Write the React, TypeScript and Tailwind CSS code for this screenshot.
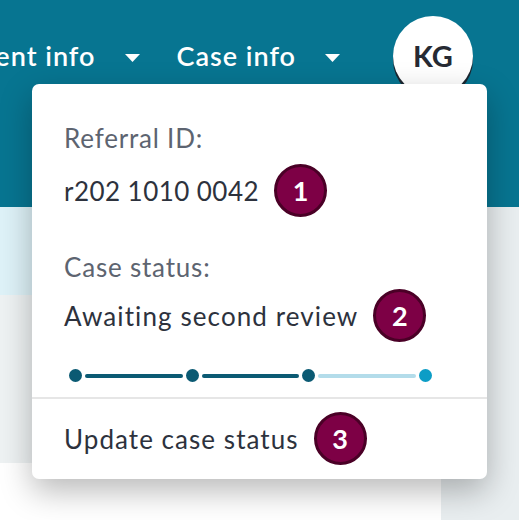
import React from "react";

function Caret() {
  return (
    <svg width="15" height="8" viewBox="0 0 15 8" className="shrink-0">
      <polygon points="0,0 15,0 7.5,8" fill="#ffffff" />
    </svg>
  );
}

function Badge({ n }: { n: string }) {
  return (
    <div className="flex h-[53px] w-[53px] shrink-0 items-center justify-center rounded-full border-[3px] border-[#4a0026] bg-[#7d0045] text-[27px] font-bold leading-none text-white">
      {n}
    </div>
  );
}

export default function App() {
  return (
    <div
      className="relative h-[520px] w-[519px] overflow-hidden bg-white"
      style={{ fontFamily: "Lato, 'Noto Sans', sans-serif" }}
    >
      {/* header */}
      <div className="flex h-[207px] items-start justify-end overflow-hidden bg-[#077591] pr-[46px] pt-[16px]">
        <div className="flex h-[80px] shrink-0 items-center whitespace-nowrap text-[27px] font-semibold tracking-[1px] text-white">
          <span>Patient info</span>
          <span className="ml-[30px] mt-[4px]">
            <Caret />
          </span>
          <span className="ml-[36px]">Case info</span>
          <span className="ml-[29px] mt-[4px]">
            <Caret />
          </span>
          <div className="ml-[53px] flex h-[80px] w-[80px] items-center justify-center rounded-full bg-white text-[29px] font-bold tracking-normal text-[#262a33] shadow-[0_4px_0_#1b2630]">
            KG
          </div>
        </div>
      </div>

      {/* body */}
      <div className="flex h-[313px]">
        <div className="flex flex-1 flex-col">
          <div className="h-[88px] bg-[#def2f8]" />
          <div className="h-[168px] bg-[#eef2f3]" />
          <div className="flex-1 bg-white" />
        </div>
        <div className="w-[78px] bg-[#e9eef0]" />
      </div>

      {/* dropdown */}
      <div className="absolute left-[32px] top-[84px] w-[455px] rounded-[7px] bg-white shadow-[0_12px_32px_rgba(0,0,0,0.28)]">
        <div className="px-[32px] pt-[38px]">
          <div className="text-[26px] leading-[32px] tracking-[0.8px] text-[#5d6470]">Referral ID:</div>
          <div className="mt-[10px] flex items-center gap-[15px]">
            <span className="text-[26px] leading-[32px] tracking-[0.45px] text-[#2d323d]">r202 1010 0042</span>
            <Badge n="1" />
          </div>
          <div className="mt-[34px] text-[26px] leading-[32px] tracking-[0.8px] text-[#5d6470]">Case status:</div>
          <div className="mt-[6px] flex items-center gap-[15px]">
            <span className="text-[26px] leading-[32px] tracking-[1.1px] text-[#2d323d]">Awaiting second review</span>
            <Badge n="2" />
          </div>
          <div className="ml-[5px] mt-[27px] flex w-[363px] items-center">
            <div className="h-[13px] w-[13px] shrink-0 rounded-full bg-[#0b5a73]" />
            <div className="mx-[3px] h-[4px] flex-1 rounded bg-[#0b5a73]" />
            <div className="h-[13px] w-[13px] shrink-0 rounded-full bg-[#0b5a73]" />
            <div className="mx-[3px] h-[4px] flex-1 rounded bg-[#0b5a73]" />
            <div className="h-[13px] w-[13px] shrink-0 rounded-full bg-[#0b5a73]" />
            <div className="mx-[3px] h-[4px] flex-1 rounded bg-[#b3dcea]" />
            <div className="h-[13px] w-[13px] shrink-0 rounded-full bg-[#0c9dc6]" />
          </div>
        </div>
        <div className="mt-[15px] h-[2px] bg-[#e6e6e6]" />
        <div className="px-[32px] pb-[14px] pt-[13px]">
          <div className="flex items-center gap-[15px]">
            <span className="text-[26px] leading-[32px] tracking-[1.05px] text-[#2d323d]">Update case status</span>
            <Badge n="3" />
          </div>
        </div>
      </div>
    </div>
  );
}
